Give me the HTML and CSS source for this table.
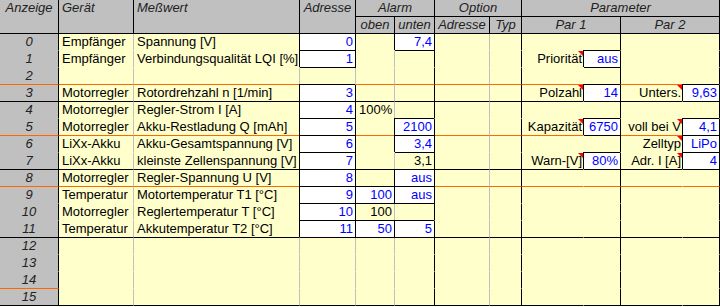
FILE: index.html
```
<!DOCTYPE html>
<html lang="de">
<head>
<meta charset="utf-8">
<title>Telemetrie</title>
<link rel="stylesheet" href="styles.css">
</head>
<body>
<div class="sheet">
  <div class="h h2">Anzeige</div>
  <div class="h h2 hl">Gerät</div>
  <div class="h h2 hl">Meßwert</div>
  <div class="h h2">Adresse</div>
  <div class="h s2">Alarm</div>
  <div class="h s2">Option</div>
  <div class="h s4">Parameter</div>
  <div class="h">oben</div>
  <div class="h">unten</div>
  <div class="h">Adresse</div>
  <div class="h">Typ</div>
  <div class="h s2">Par 1</div>
  <div class="h s2">Par 2</div>

  <div class="row"><div class="c">0</div><div class="c">Empfänger</div><div class="c">Spannung [V]</div><div class="c w n">0</div><div class="c"></div><div class="c w n">7,4</div><div class="c"></div><div class="c"></div><div class="c"></div><div class="c"></div><div class="c"></div><div class="c"></div></div>
  <div class="row"><div class="c">1</div><div class="c">Empfänger</div><div class="c">Verbindungsqualität LQI [%]</div><div class="c w n">1</div><div class="c"></div><div class="c"></div><div class="c"></div><div class="c"></div><div class="c lbl">Priorität</div><div class="c w n">aus</div><div class="c"></div><div class="c"></div></div>
  <div class="row lo"><div class="c">2</div><div class="c"></div><div class="c"></div><div class="c"></div><div class="c"></div><div class="c"></div><div class="c"></div><div class="c"></div><div class="c"></div><div class="c"></div><div class="c"></div><div class="c"></div></div>
  <div class="row lk"><div class="c">3</div><div class="c">Motorregler</div><div class="c">Rotordrehzahl n [1/min]</div><div class="c w n">3</div><div class="c"></div><div class="c"></div><div class="c"></div><div class="c"></div><div class="c lbl">Polzahl</div><div class="c w n">14</div><div class="c lbl">Unters.</div><div class="c w n">9,63</div></div>
  <div class="row"><div class="c">4</div><div class="c">Motorregler</div><div class="c">Regler-Strom I [A]</div><div class="c w n">4</div><div class="c n k">100%</div><div class="c"></div><div class="c"></div><div class="c"></div><div class="c"></div><div class="c"></div><div class="c"></div><div class="c"></div></div>
  <div class="row lo"><div class="c">5</div><div class="c">Motorregler</div><div class="c">Akku-Restladung Q [mAh]</div><div class="c w n">5</div><div class="c"></div><div class="c w n">2100</div><div class="c"></div><div class="c"></div><div class="c lbl">Kapazität</div><div class="c w n">6750</div><div class="c lbl">voll bei V</div><div class="c w n">4,1</div></div>
  <div class="row"><div class="c">6</div><div class="c">LiXx-Akku</div><div class="c">Akku-Gesamtspannung [V]</div><div class="c w n">6</div><div class="c"></div><div class="c w n">3,4</div><div class="c"></div><div class="c"></div><div class="c"></div><div class="c"></div><div class="c lbl">Zelltyp</div><div class="c w n">LiPo</div></div>
  <div class="row lk"><div class="c">7</div><div class="c">LiXx-Akku</div><div class="c">kleinste Zellenspannung [V]</div><div class="c w n">7</div><div class="c"></div><div class="c n k">3,1</div><div class="c"></div><div class="c"></div><div class="c lbl">Warn-[V]</div><div class="c w n">80%</div><div class="c lbl">Adr. I [A]</div><div class="c w n">4</div></div>
  <div class="row lo"><div class="c">8</div><div class="c">Motorregler</div><div class="c">Regler-Spannung U [V]</div><div class="c w n">8</div><div class="c"></div><div class="c w n">aus</div><div class="c"></div><div class="c"></div><div class="c"></div><div class="c"></div><div class="c"></div><div class="c"></div></div>
  <div class="row"><div class="c">9</div><div class="c">Temperatur</div><div class="c">Motortemperatur T1 [°C]</div><div class="c w n">9</div><div class="c w n">100</div><div class="c w n">aus</div><div class="c"></div><div class="c"></div><div class="c"></div><div class="c"></div><div class="c"></div><div class="c"></div></div>
  <div class="row"><div class="c">10</div><div class="c">Motorregler</div><div class="c">Reglertemperatur T [°C]</div><div class="c w n">10</div><div class="c n k">100</div><div class="c"></div><div class="c"></div><div class="c"></div><div class="c"></div><div class="c"></div><div class="c"></div><div class="c"></div></div>
  <div class="row lk"><div class="c">11</div><div class="c">Temperatur</div><div class="c">Akkutemperatur T2 [°C]</div><div class="c w n">11</div><div class="c w n">50</div><div class="c w n">5</div><div class="c"></div><div class="c"></div><div class="c"></div><div class="c"></div><div class="c"></div><div class="c"></div></div>
  <div class="row"><div class="c">12</div><div class="c"></div><div class="c"></div><div class="c"></div><div class="c"></div><div class="c"></div><div class="c"></div><div class="c"></div><div class="c"></div><div class="c"></div><div class="c"></div><div class="c"></div></div>
  <div class="row"><div class="c">13</div><div class="c"></div><div class="c"></div><div class="c"></div><div class="c"></div><div class="c"></div><div class="c"></div><div class="c"></div><div class="c"></div><div class="c"></div><div class="c"></div><div class="c"></div></div>
  <div class="row"><div class="c sep">14</div><div class="c"></div><div class="c"></div><div class="c"></div><div class="c"></div><div class="c"></div><div class="c"></div><div class="c"></div><div class="c"></div><div class="c"></div><div class="c"></div><div class="c"></div></div>
  <div class="row lk"><div class="c">15</div><div class="c"></div><div class="c"></div><div class="c"></div><div class="c"></div><div class="c"></div><div class="c"></div><div class="c"></div><div class="c"></div><div class="c"></div><div class="c"></div><div class="c"></div></div>
</div>
</body>
</html>
```
FILE: styles.css
```
* { box-sizing: border-box; }
html, body { margin: 0; padding: 0; background: #ffffff; }
body {
  font-family: "Liberation Sans", Arial, sans-serif;
  font-size: 13px;
  line-height: 16px;
  color: #000;
}
.sheet {
  display: grid;
  grid-template-columns: 59px 75px 166px 56px 39px 40px 55px 32px 62px 37px 62px 37px;
  grid-template-rows: 17px 17px;
  grid-auto-rows: 17px;
  width: 720px;
}
.h {
  background: #c0c0c0;
  color: #222;
  font-style: italic;
  text-align: center;
  white-space: nowrap;
  border-right: 1px solid #000;
  border-bottom: 1px solid #000;
}
.h2 { grid-row: span 2; }
.hl { text-align: left; padding-left: 3px; }
.s2 { grid-column: span 2; }
.s4 { grid-column: span 4; }

.row { display: contents; }
.row.lo { --line: #ff6600; }
.row.lk { --line: #000; }

.c {
  --bg: #ffffcc;
  position: relative;
  background: var(--bg);
  border-right: 1px solid var(--vr, var(--bg));
  border-bottom: 1px solid var(--line, var(--bg));
  padding: 0 2px 0 3px;
  white-space: nowrap;
}
.row > .c:nth-child(1) {
  --bg: #c0c0c0;
  --vr: #000;
  font-style: italic;
  text-align: center;
  color: #222;
  padding: 0;
}
.row > .c:nth-child(2),
.row > .c:nth-child(3),
.row > .c:nth-child(4),
.row > .c:nth-child(5),
.row > .c:nth-child(7) { --vr: #c0c0c0; }
.row > .c:nth-child(6),
.row > .c:nth-child(8),
.row > .c:nth-child(10),
.row > .c:nth-child(12) { --vr: #000; }

.row > .c.sep { --line: #ff6600; }

.n { text-align: right; }
.row > .c.w {
  --bg: #ffffff;
  color: #0000ff;
  border-right-color: #000;
  border-bottom-color: #000;
  box-shadow: -1px -1px 0 0 #000;
}
.k { color: #000; }

.lbl { text-align: right; padding-right: 1px; }
.lbl::after {
  content: "";
  position: absolute;
  top: 0;
  right: 0;
  width: 0;
  height: 0;
  border-left: 5px solid transparent;
  border-top: 5px solid #ff0000;
}
```
